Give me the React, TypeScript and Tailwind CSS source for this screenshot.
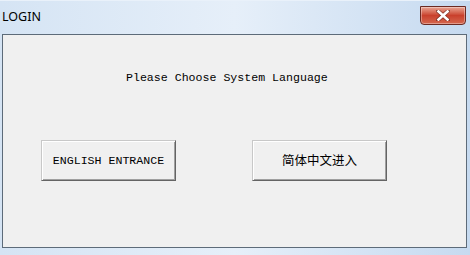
import React from "react";

const mono = { fontFamily: '"SimSun","Liberation Mono","Noto Sans CJK SC",monospace' };

function Btn({ children, cjk }: { children: React.ReactNode; cjk?: boolean }) {
  return (
    <div className="w-[135px] h-[41px] bg-[#f0f0f0] flex items-center justify-center border border-t-[#c8c8c8] border-l-[#c8c8c8] border-r-[#646464] border-b-[#646464] shadow-[inset_1px_1px_0_#ffffff,inset_-1px_-1px_0_#a0a0a0]">
      <span
        className={cjk ? "text-[12.5px] text-black" : "text-[11.6px] text-black"}
        style={cjk ? { fontFamily: '"Noto Sans CJK SC",sans-serif' } : mono}
      >
        {children}
      </span>
    </div>
  );
}

export default function App() {
  return (
    <div className="w-[470px] h-[255px] overflow-hidden flex flex-col bg-gradient-to-r from-[#d5e4f4] via-[#e6eff9] to-[#c6daf0]">
      <div className="h-[34px] flex items-start shrink-0 relative border-t border-[#e9f1fa]">
        <span className="mt-[10px] ml-[2px] text-[12.5px] text-black leading-none" style={{ fontFamily: '"Noto Sans","Liberation Sans",sans-serif' }}>
          LOGIN
        </span>
        <div className="ml-auto mr-[4px] mt-[5px] w-[46px] h-[19px] rounded-b-[4px] border border-[#6b2a22] bg-gradient-to-b from-[#e8a594] via-[#c9402c] to-[#d4674f] flex items-center justify-center shadow-[inset_0_0_0_1px_rgba(255,255,255,0.35)]">
          <svg width="14" height="11" viewBox="0 0 14 11">
            <path d="M2 1 L12 10 M12 1 L2 10" stroke="#3d1410" strokeWidth="4" strokeLinecap="square" opacity="0.5" />
            <path d="M2.5 1.5 L11.5 9.5 M11.5 1.5 L2.5 9.5" stroke="#ffffff" strokeWidth="2.6" strokeLinecap="square" />
          </svg>
        </div>
      </div>
      <div className="ml-[2px] w-[465px] h-[214px] shrink-0 border border-[#5d6b79] bg-[#f0f0f0] flex flex-col">
        <div className="mt-[36px] ml-[123px] text-[11.6px] leading-[14px] text-black whitespace-pre" style={mono}>
          Please Choose System Language
        </div>
        <div className="mt-[55px] ml-[38px] flex gap-[76px]">
          <Btn>ENGLISH ENTRANCE</Btn>
          <Btn cjk>简体中文进入</Btn>
        </div>
      </div>
    </div>
  );
}
